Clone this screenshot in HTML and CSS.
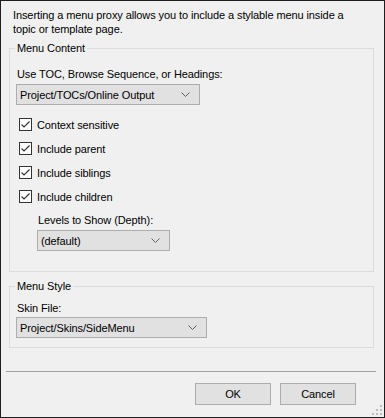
FILE: index.html
```html
<!DOCTYPE html>
<html lang="en">
<head>
    <meta charset="UTF-8">
    <title>Insert Menu Proxy</title>
    <link rel="stylesheet" href="styles.css">
</head>
<body>
    <div class="dialog">
        <p class="intro">Inserting a menu proxy allows you to include a stylable menu inside a topic or template page.</p>

        <fieldset class="group group-content">
            <legend>Menu Content</legend>
            <div class="field-label">Use TOC, Browse Sequence, or Headings:</div>
            <div class="combo combo-toc">
                <span>Project/TOCs/Online Output</span>
                <svg class="chevron" width="9" height="5" viewBox="0 0 9 5"><path d="M0.5 0.5 L4.5 4.5 L8.5 0.5" fill="none" stroke="#606060" stroke-width="1"/></svg>
            </div>

            <div class="checks">
                <label class="check"><span class="box"><svg width="11" height="11" viewBox="0 0 11 11"><path d="M1.5 5.5 L4 8 L9.5 2.5" fill="none" stroke="#333" stroke-width="1.2"/></svg></span>Context sensitive</label>
                <label class="check"><span class="box"><svg width="11" height="11" viewBox="0 0 11 11"><path d="M1.5 5.5 L4 8 L9.5 2.5" fill="none" stroke="#333" stroke-width="1.2"/></svg></span>Include parent</label>
                <label class="check"><span class="box"><svg width="11" height="11" viewBox="0 0 11 11"><path d="M1.5 5.5 L4 8 L9.5 2.5" fill="none" stroke="#333" stroke-width="1.2"/></svg></span>Include siblings</label>
                <label class="check"><span class="box"><svg width="11" height="11" viewBox="0 0 11 11"><path d="M1.5 5.5 L4 8 L9.5 2.5" fill="none" stroke="#333" stroke-width="1.2"/></svg></span>Include children</label>
            </div>

            <div class="depth">
                <div class="field-label">Levels to Show (Depth):</div>
                <div class="combo combo-depth">
                    <span>(default)</span>
                    <svg class="chevron" width="9" height="5" viewBox="0 0 9 5"><path d="M0.5 0.5 L4.5 4.5 L8.5 0.5" fill="none" stroke="#606060" stroke-width="1"/></svg>
                </div>
            </div>
        </fieldset>

        <fieldset class="group group-style">
            <legend>Menu Style</legend>
            <div class="field-label">Skin File:</div>
            <div class="combo combo-skin">
                <span>Project/Skins/SideMenu</span>
                <svg class="chevron" width="9" height="5" viewBox="0 0 9 5"><path d="M0.5 0.5 L4.5 4.5 L8.5 0.5" fill="none" stroke="#606060" stroke-width="1"/></svg>
            </div>
        </fieldset>

        <div class="separator"></div>

        <div class="buttons">
            <button class="btn">OK</button>
            <button class="btn">Cancel</button>
        </div>

        <svg class="grip" width="11" height="11" viewBox="0 0 11 11">
            <rect x="8" y="0" width="2" height="2" fill="#bcbcbc"/>
            <rect x="4" y="4" width="2" height="2" fill="#bcbcbc"/>
            <rect x="8" y="4" width="2" height="2" fill="#bcbcbc"/>
            <rect x="0" y="8" width="2" height="2" fill="#bcbcbc"/>
            <rect x="4" y="8" width="2" height="2" fill="#bcbcbc"/>
            <rect x="8" y="8" width="2" height="2" fill="#bcbcbc"/>
        </svg>
    </div>
</body>
</html>
```

FILE: styles.css
```css
body {
    margin: 0;
    font-family: 'Liberation Sans', Arial, sans-serif;
    font-size: 11px;
    letter-spacing: -0.1px;
    color: #000;
    background: #f0f0f0;
}
.dialog {
    position: relative;
    width: 385px;
    height: 418px;
    box-sizing: border-box;
    border: 1px solid #1e1e1e;
    background: #f0f0f0;
    display: flex;
    flex-direction: column;
}
.intro {
    margin: 7px 20px 0 12px;
    line-height: 14px;
}
.group {
    margin: 5px 0 0 8px;
    width: 365px;
    box-sizing: border-box;
    padding: 0 0 0 6px;
    border: 1px solid #dcdcdc;
    min-inline-size: 0;
}
.group legend {
    padding: 0 2px;
    line-height: 14px;
    margin-left: -1px;
}
.group-content {
    padding-bottom: 20px;
}
.group-content > .field-label {
    margin-top: 12px;
}
.group-style {
    margin-top: 7px;
    padding-bottom: 9px;
}
.group-style > .field-label {
    margin-top: 8px;
}
.field-label {
    line-height: 14px;
    padding-left: 1px;
}
.combo {
    margin-top: 3px;
    height: 21px;
    box-sizing: border-box;
    border: 1px solid #adadad;
    background: #e1e1e1;
    display: flex;
    align-items: center;
    justify-content: space-between;
    padding: 0 9px 0 3px;
}
.combo-toc {
    width: 184px;
}
.combo-depth {
    width: 133px;
}
.combo-skin {
    width: 191px;
    margin-top: 2px;
}
.chevron {
    display: block;
}
.checks {
    margin-top: 12px;
    display: flex;
    flex-direction: column;
    gap: 9px;
}
.check {
    display: flex;
    align-items: center;
    height: 15px;
    padding-left: 3px;
}
.box {
    width: 13px;
    height: 13px;
    box-sizing: border-box;
    border: 1px solid #333;
    background: #fff;
    margin-right: 5px;
    display: flex;
    align-items: center;
    justify-content: center;
}
.box svg {
    display: block;
}
.depth {
    margin-top: 9px;
    padding-left: 21px;
}
.separator {
    margin: 23px 0 0 5px;
    width: 370px;
    height: 1px;
    background: #a0a0a0;
}
.buttons {
    margin-top: 11px;
    display: flex;
    justify-content: flex-end;
    gap: 9px;
    padding-right: 28px;
}
.btn {
    width: 76px;
    height: 22px;
    border: 1px solid #adadad;
    background: #e1e1e1;
    font-family: 'Liberation Sans', Arial, sans-serif;
    font-size: 11px;
    letter-spacing: -0.1px;
    color: #000;
    padding: 0;
}
.grip {
    position: absolute;
    right: 1px;
    bottom: 1px;
}
```
